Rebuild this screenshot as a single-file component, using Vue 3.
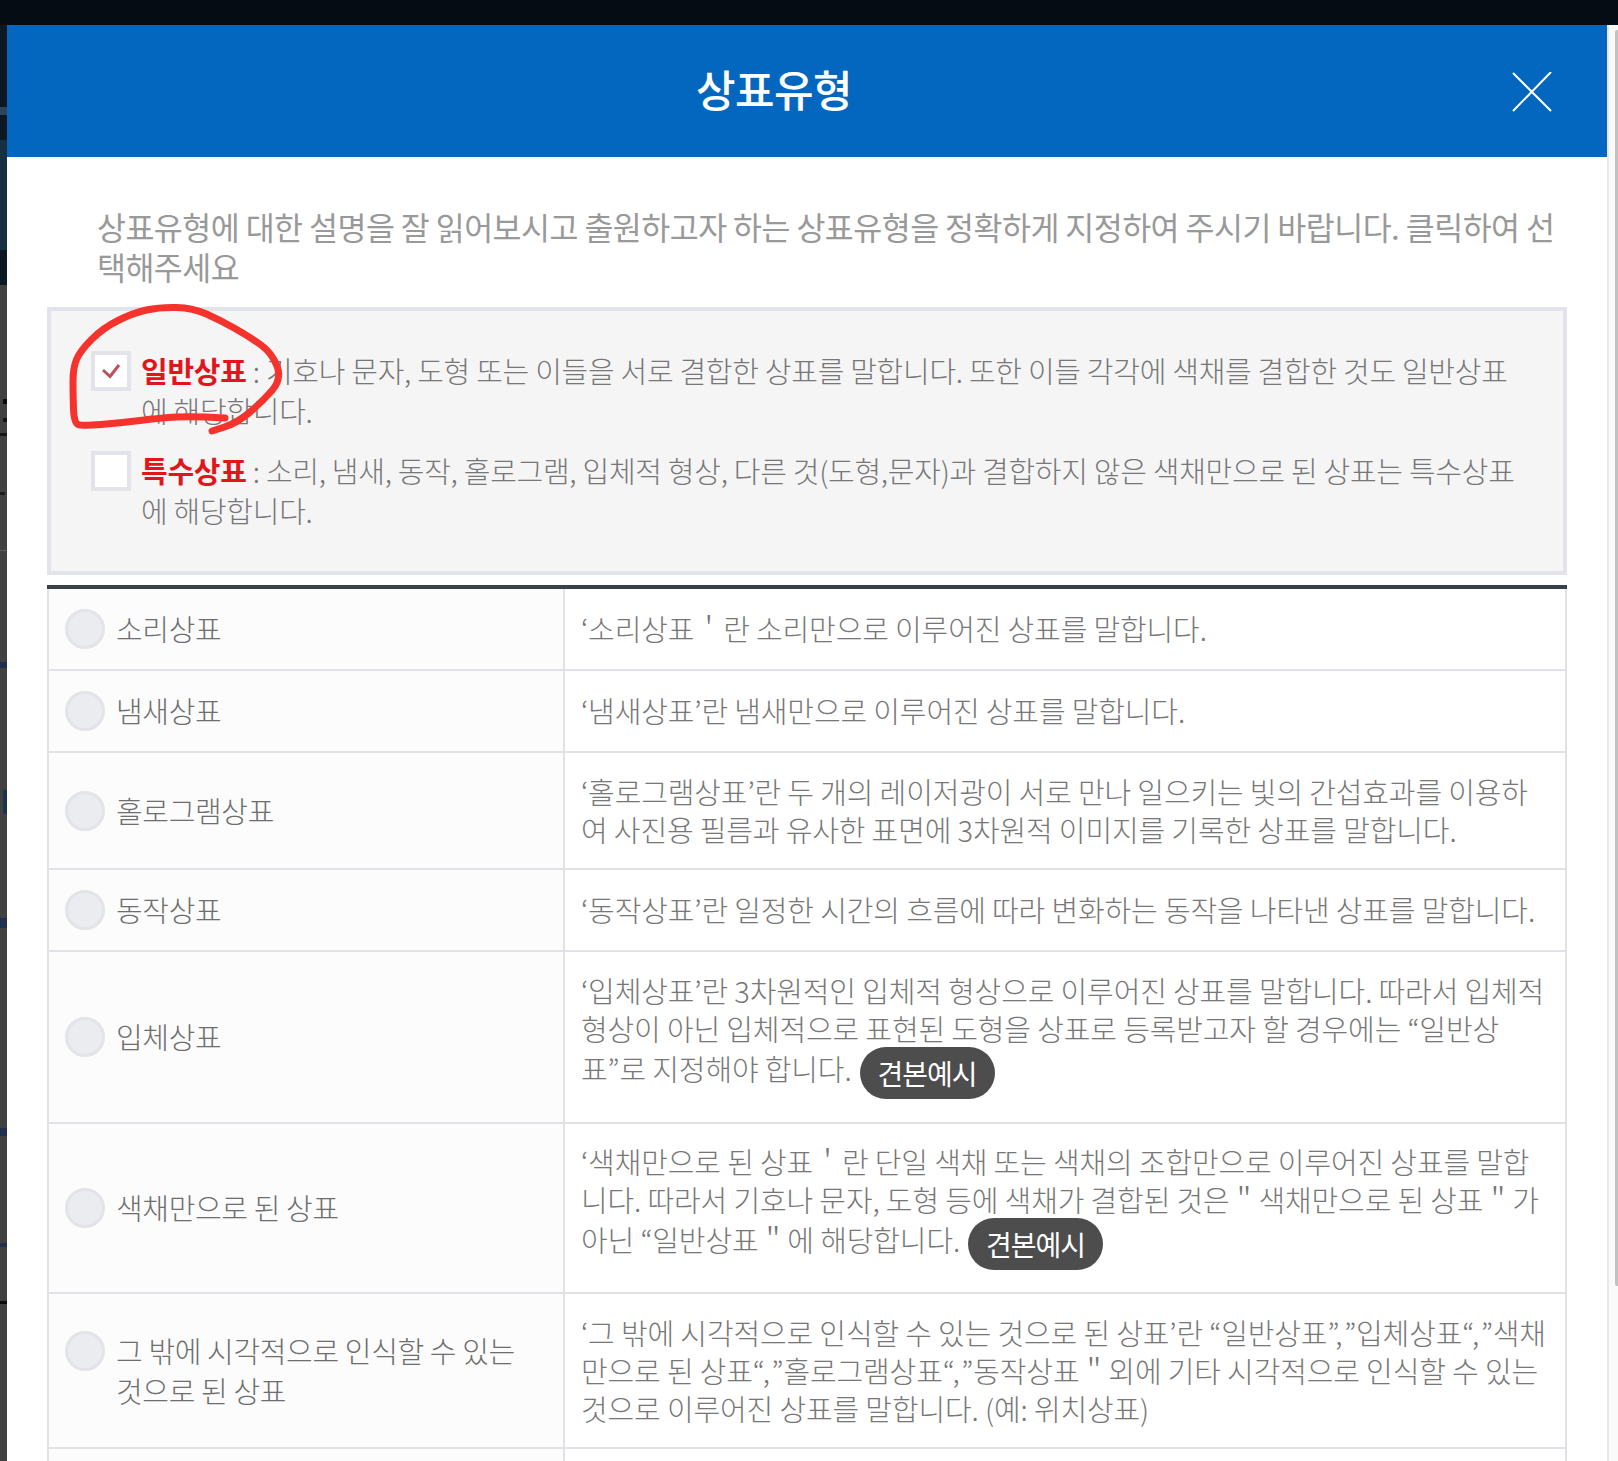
<script setup>
const specks = [
  { y: 107, h: 8, x: 0, w: 7, c: '#2c4657' },
  { y: 140, h: 110, x: 0, w: 7, c: '#16303f' },
  { y: 399, h: 5, x: 3, w: 4, c: '#0c0c0c' },
  { y: 418, h: 4, x: 3, w: 4, c: '#141414' },
  { y: 433, h: 3, x: 0, w: 7, c: '#161616' },
  { y: 492, h: 3, x: 0, w: 5, c: '#1c1c1c' },
  { y: 550, h: 1, x: 0, w: 7, c: '#5e5e5e' },
  { y: 662, h: 6, x: 0, w: 7, c: '#1f3050' },
  { y: 790, h: 24, x: 3, w: 4, c: '#1f3050' },
  { y: 918, h: 10, x: 0, w: 7, c: '#1f3050' },
  { y: 1128, h: 8, x: 0, w: 7, c: '#1f3050' },
  { y: 1243, h: 4, x: 0, w: 7, c: '#1f3050' },
  { y: 1301, h: 3, x: 0, w: 7, c: '#0c0c0c' }
]

const pts = [
  [165, 123], [133, 121], [100, 123], [60, 128], [22, 131], [14, 128], [13, 100], [13, 73],
  [20, 56], [43, 33], [73, 18], [100, 12], [133, 13], [160, 25], [190, 42], [212, 58],
  [222, 84], [202, 107], [177, 128], [152, 136]
]
const scribble = pts.reduce((d, p, i) => {
  if (i === 0) return `M${p[0]} ${p[1]}`
  if (i === pts.length - 1) return `${d} L${p[0]} ${p[1]}`
  const n = pts[i + 1]
  return `${d} Q${p[0]} ${p[1]} ${(p[0] + n[0]) / 2} ${(p[1] + n[1]) / 2}`
}, '')

const options = [
  { name: '일반상표', lines: [' : 기호나 문자, 도형 또는 이들을 서로 결합한 상표를 말합니다. 또한 이들 각각에 색채를 결합한 것도 일반상표', '에 해당합니다.'], checked: true },
  { name: '특수상표', lines: [' : 소리, 냄새, 동작, 홀로그램, 입체적 형상, 다른 것(도형,문자)과 결합하지 않은 색채만으로 된 상표는 특수상표', '에 해당합니다.'], checked: false }
]

const rows = [
  { h: 82, label: ['소리상표'], lines: ['‘소리상표＇란 소리만으로 이루어진 상표를 말합니다.'] },
  { h: 82, label: ['냄새상표'], lines: ['‘냄새상표’란 냄새만으로 이루어진 상표를 말합니다.'] },
  { h: 117, label: ['홀로그램상표'], lines: ['‘홀로그램상표’란 두 개의 레이저광이 서로 만나 일으키는 빛의 간섭효과를 이용하', '여 사진용 필름과 유사한 표면에 3차원적 이미지를 기록한 상표를 말합니다.'] },
  { h: 82, label: ['동작상표'], lines: ['‘동작상표’란 일정한 시간의 흐름에 따라 변화하는 동작을 나타낸 상표를 말합니다.'] },
  { h: 172, label: ['입체상표'], lines: ['‘입체상표’란 3차원적인 입체적 형상으로 이루어진 상표를 말합니다. 따라서 입체적', '형상이 아닌 입체적으로 표현된 도형을 상표로 등록받고자 할 경우에는 “일반상', '표”로 지정해야 합니다.'], pill: true },
  { h: 170, label: ['색채만으로 된 상표'], lines: ['‘색채만으로 된 상표＇란 단일 색채 또는 색채의 조합만으로 이루어진 상표를 말합', '니다. 따라서 기호나 문자, 도형 등에 색채가 결합된 것은＂색채만으로 된 상표＂가', '아닌 “일반상표＂에 해당합니다.'], pill: true },
  { h: 155, label: ['그 밖에 시각적으로 인식할 수 있는', '것으로 된 상표'], lines: ['‘그 밖에 시각적으로 인식할 수 있는 것으로 된 상표’란 “일반상표”,\u200a”입체상표“,\u200a”색채', '만으로 된 상표“,\u200a”홀로그램상표“,\u200a”동작상표＂외에 기타 시각적으로 인식할 수 있는', '것으로 이루어진 상표를 말합니다. (예: 위치상표)'] },
  { h: 60, label: [], lines: [], empty: true }
]
</script>

<template>
  <div class="page">
    <span
      v-for="(s, i) in specks"
      :key="i"
      class="speck"
      :style="{ top: s.y + 'px', left: s.x + 'px', width: s.w + 'px', height: s.h + 'px', background: s.c }"
    ></span>

    <main class="modal">
      <header class="head">
        <h1 class="title">상표유형</h1>
        <svg class="close" viewBox="0 0 40 40" width="40" height="40" aria-label="닫기">
          <path d="M1 1 L39 39 M39 0 L1 39" stroke="#fff" stroke-width="2" fill="none" />
        </svg>
      </header>

      <section class="body">
        <p class="intro">
          상표유형에 대한 설명을 잘 읽어보시고 출원하고자 하는 상표유형을 정확하게 지정하여 주시기 바랍니다. 클릭하여 선<br />택해주세요
        </p>

        <div class="box">
          <div v-for="o in options" :key="o.name" class="opt">
            <span class="check">
              <svg v-if="o.checked" viewBox="0 0 20 16" width="20" height="16">
                <path d="M2 7 L9 13.5 L18 2" stroke="#c0505c" stroke-width="3" fill="none" />
              </svg>
            </span>
            <p class="opt-text">
              <strong>{{ o.name }}</strong>{{ o.lines[0] }}<br />{{ o.lines[1] }}
            </p>
          </div>
          <svg class="scribble" viewBox="0 0 240 150" width="240" height="150">
            <path
              :d="scribble"
              stroke="#f5332c"
              stroke-width="7"
              stroke-linecap="round"
              stroke-linejoin="round"
              fill="none"
            />
          </svg>
        </div>

        <div class="table">
          <div v-for="(r, i) in rows" :key="i" class="row" :style="{ height: r.h + 'px' }">
            <div class="cell-name">
              <template v-if="!r.empty">
                <span class="radio"></span>
                <span class="name">
                  <template v-for="(l, j) in r.label" :key="j">{{ l }}<br /></template>
                </span>
              </template>
            </div>
            <div class="cell-desc">
              <p class="desc" :class="{ 'has-pill': r.pill }">
                <template v-for="(l, j) in r.lines" :key="j">{{ l }}<br v-if="j < r.lines.length - 1" /></template>
                <span v-if="r.pill" class="pill">견본예시</span>
              </p>
            </div>
          </div>
        </div>
      </section>
    </main>

    <aside class="rail"><span class="thumb"></span></aside>
  </div>
</template>

<style>
html, body { margin: 0; background: #414141; }
</style>

<style scoped>
.page {
  position: relative;
  display: flex;
  box-sizing: border-box;
  width: 1618px;
  height: 1461px;
  padding: 25px 0 0 7px;
  overflow: hidden;
  background: linear-gradient(to bottom, #060c14 0 25px, #0b1824 25px 285px, #414141 285px);
  font-family: "Noto Sans CJK KR", "Noto Sans", sans-serif;
  font-weight: 300;
}
.speck { position: absolute; }
.modal { width: 1600px; flex: none; background: #fff; }
.head {
  display: flex;
  align-items: center;
  height: 132px;
  background: #0467bf;
  position: relative;
}
.title {
  width: 1534px;
  margin: -6px 0 0;
  text-align: center;
  color: #fff;
  font-size: 43px;
  font-weight: 500;
  letter-spacing: -0.6px;
}
.close { position: absolute; left: 1505px; top: 47px; }
.body { padding: 0 40px; }
.intro {
  margin: 49px 0 0;
  padding-left: 50px;
  color: #999;
  font-size: 31.5px;
  font-weight: 400;
  line-height: 40px;
  letter-spacing: -0.55px;
  white-space: nowrap;
}
.box {
  position: relative;
  box-sizing: border-box;
  height: 268px;
  margin-top: 21px;
  padding: 40px 40px 0;
  border: 4px solid #e2e4ea;
  background: #f5f5f6;
}
.opt { display: flex; gap: 10px; margin-bottom: 21px; }
.check {
  display: flex;
  align-items: center;
  justify-content: center;
  flex: none;
  box-sizing: border-box;
  width: 40px;
  height: 40px;
  border: 4px solid #e2e4ea;
  background: #fff;
}
.opt-text {
  margin: 0;
  color: #777;
  font-size: 29px;
  line-height: 39.5px;
  letter-spacing: -0.27px;
  white-space: nowrap;
}
.opt-text strong { color: #e3151c; font-weight: 700; }
.scribble { position: absolute; left: 9px; top: -16px; pointer-events: none; }
.table {
  width: 1520px;
  margin-top: 10px;
  border-top: 4px solid #3a4048;
  box-sizing: border-box;
}
.row {
  display: grid;
  grid-template-columns: 516px 1004px;
  box-sizing: border-box;
  border: solid #e0e2e7;
  border-width: 0 2px 2px;
}
.cell-name {
  display: flex;
  align-items: center;
  gap: 11px;
  padding-left: 16px;
  background: #fcfcfd;
  border-right: 2px solid #e0e2e7;
}
.radio {
  flex: none;
  align-self: center;
  box-sizing: border-box;
  width: 40px;
  height: 40px;
  border: 3px solid #e2e4e8;
  border-radius: 50%;
  background: #ebecef;
}
.row:nth-child(7) .radio { margin-top: -40px; }
.name {
  margin-top: -2px;
  color: #6e6e6e;
  font-size: 29px;
  line-height: 40px;
  letter-spacing: -0.35px;
  white-space: nowrap;
}
.cell-desc { display: flex; align-items: center; padding-left: 16px; }
.desc {
  margin: -2px 0 0;
  color: #777;
  font-size: 29px;
  line-height: 38px;
  letter-spacing: -0.13px;
  white-space: nowrap;
}
.has-pill { margin-top: -5px; }
.pill {
  display: inline-block;
  vertical-align: middle;
  margin-left: 8px;
  padding: 0 18px;
  height: 52px;
  line-height: 52px;
  border-radius: 26px;
  background: #4d4d4d;
  color: #fff;
  font-size: 28px;
  font-weight: 400;
  letter-spacing: -1px;
}
.rail {
  position: relative;
  flex: none;
  width: 11px;
  box-sizing: border-box;
  border-left: 2px solid #e8e8e8;
  background: #fafafa;
}
.thumb {
  position: absolute;
  left: 6px;
  top: 5px;
  width: 3px;
  height: 1256px;
  border-radius: 2px 0 0 2px;
  background: #c2c2c2;
}
</style>
